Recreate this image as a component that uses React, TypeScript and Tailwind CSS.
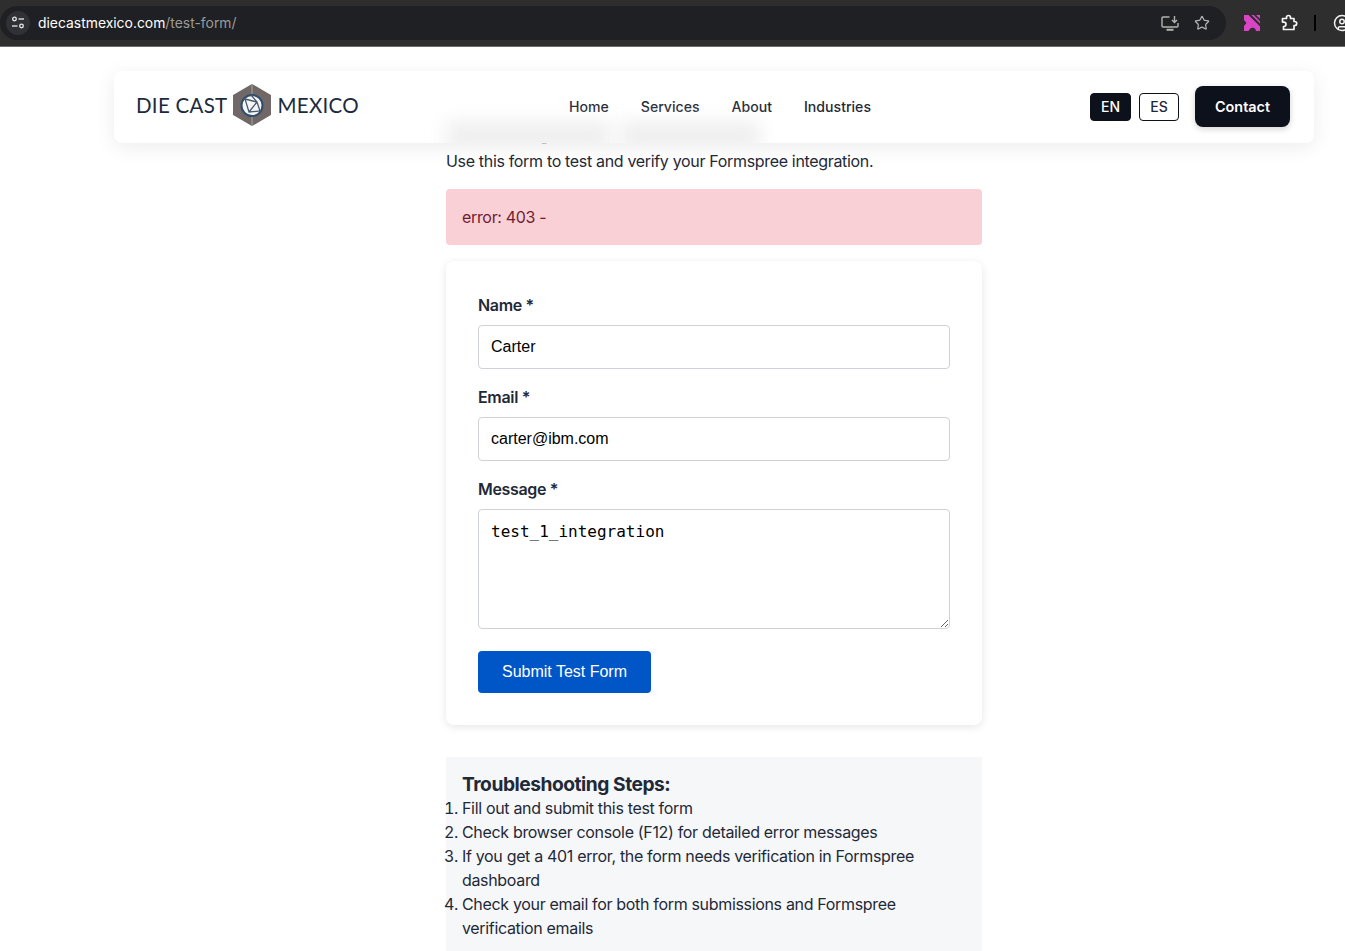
import { CircleUser, Star } from "lucide-react";

const steps = [
  "Fill out and submit this test form",
  "Check browser console (F12) for detailed error messages",
  "If you get a 401 error, the form needs verification in Formspree dashboard",
  "Check your email for both form submissions and Formspree verification emails",
];

const navLinks = ["Home", "Services", "About", "Industries"];

function TuneIcon() {
  return (
    <svg width="16" height="16" viewBox="0 0 16 16" fill="none" stroke="#e8eaed" strokeWidth="1.3">
      <circle cx="4.5" cy="4" r="1.8" />
      <path d="M8.5 4H14" />
      <circle cx="11.5" cy="11" r="1.8" />
      <path d="M2 11H7.5" />
    </svg>
  );
}

function InstallIcon() {
  return (
    <svg width="18" height="16" viewBox="0 0 18 16" fill="none" stroke="#b3b3b3" strokeWidth="1.4">
      <path d="M8.5 2H2a1 1 0 0 0-1 1v8a1 1 0 0 0 1 1h14a1 1 0 0 0 1-1V8" />
      <path d="M5.5 14.8h7" strokeWidth="2" />
      <path d="M13.5 1v6M11 5l2.5 2.5L16 5" />
    </svg>
  );
}

function PinkExtension() {
  return (
    <svg width="16" height="16" viewBox="0 0 16 16">
      <path fill="#d945c4" d="M0 0h4.500L16 11.500V16h-4a3.500 3.500 0 0 0-6.500-1.500L4.500 16H0v-5l2.500-3L0 5z" />
      <path fill="#d945c4" d="M7.500 0h2.300L16 6.200V8.500zM12 0h4v3.800z" />
    </svg>
  );
}

function PuzzleOutline() {
  return (
    <svg width="18" height="18" viewBox="0 0 18 18" fill="none" stroke="#f4f4f4" strokeWidth="1.7" strokeLinejoin="round">
      <path d="M2.500 4.500H6.500V3.500a2 2 0 0 1 4 0V4.500H14V7.500h.7a2 2 0 0 1 0 4H14V15.500H3.500V12.500h.3a2.200 2.200 0 0 0 0-4.400H2.500z" />
    </svg>
  );
}

function LogoMark() {
  return (
    <svg width="40" height="42" viewBox="0 0 40 42">
      <path fill="#6f6866" stroke="#6f6866" strokeWidth="2" strokeLinejoin="round" d="M20 1 38 11.500v19L20 41 2 30.500v-19z" />
      <path stroke="#a9a4a2" strokeWidth="1" d="M20 0v42" />
      <circle cx="20" cy="21.500" r="10.500" fill="#f4f5f6" stroke="#2f4d6e" strokeWidth="2" />
      <path fill="none" stroke="#4a5a6c" strokeWidth="1.300" d="M13 15l12 3 3 9-11 1-4-13zM25 18l-6-7M17 28l8-10" />
    </svg>
  );
}

export default function App() {
  return (
    <div className="h-screen w-screen overflow-hidden bg-white font-['Inter',sans-serif] text-[#1f2937]">
      <div className="w-[1428px]">
        {/* browser chrome */}
        <div className="flex h-[47px] items-center border-b border-[#6b6b6b] bg-[#2e2e2e]">
          <div className="flex h-[34px] w-[1226px] items-center rounded-[17px] bg-[#1f2023] pl-[6px] pr-[16px]">
            <div className="flex h-6 w-6 items-center justify-center rounded-full bg-[#303134]">
              <TuneIcon />
            </div>
            <span className="ml-2 text-[13.9px] text-white">diecastmexico.com</span>
            <span className="text-[13.9px] text-[#9a9a9a]">/test-form/</span>
            <div className="ml-auto flex items-center gap-[15px]">
              <InstallIcon />
              <Star size={16} color="#b3b3b3" strokeWidth={1.8} />
            </div>
          </div>
          <div className="ml-[18px]">
            <PinkExtension />
          </div>
          <div className="ml-[20px]">
            <PuzzleOutline />
          </div>
          <div className="ml-[16px] h-[16px] w-[2px] bg-black" />
          <CircleUser className="ml-[17px]" size={18} color="#f1f1f1" strokeWidth={2} />
        </div>

        <div className="relative">
          {/* site header, floats over the page */}
          <header className="absolute left-[114px] top-[24px] z-10 flex h-[72px] w-[1200px] items-center overflow-hidden rounded-lg bg-white pl-[22px] pr-[24px] shadow-[0_4px_20px_rgba(0,0,0,0.08)]">
            {/* frosted smudge of the page title passing under the header */}
            <div className="absolute left-[332px] top-[50px] h-[30px] w-[164px] bg-[#efefef] blur-[9px]" />
            <div className="absolute left-[506px] top-[50px] h-[30px] w-[140px] bg-[#efefef] blur-[9px]" />

            <div className="mb-1 flex w-[222px] items-center whitespace-nowrap text-[#1c2a3d]">
              <span className="font-['Lato',sans-serif] text-[20.5px] leading-none tracking-[0.28px]">DIE CAST</span>
              <div className="ml-[5px] mr-[5px] shrink-0">
                <LogoMark />
              </div>
              <span className="font-['Lato',sans-serif] text-[20.5px] leading-none tracking-[0.28px]">MEXICO</span>
            </div>
            <nav className="ml-[211px] flex gap-8">
              {navLinks.map((link) => (
                <a key={link} className="text-[14.1px] font-medium leading-5 text-[#1f2937]">
                  {link}
                </a>
              ))}
            </nav>
            <div className="ml-auto flex items-center gap-2">
              <button className="h-7 w-[41px] rounded border border-[#0d111c] bg-[#0d111c] text-sm font-medium text-white">EN</button>
              <button className="h-7 w-10 rounded border border-[#0d111c] bg-white text-sm font-medium text-[#1f2937]">ES</button>
              <button className="mb-px ml-2 h-[41px] w-[95px] rounded-lg bg-[#0d111c] text-[14.4px] font-semibold text-white shadow-[0_2px_6px_rgba(0,0,0,0.18)]">Contact</button>
            </div>
          </header>

          <main className="ml-[446px] w-[536px] pt-[60px] text-base leading-6 tracking-[-0.33px]">
            <h1 className="mb-1 text-[32px] font-bold leading-[38px] tracking-[-0.85px]">Formspree Test Form</h1>
            <p className="mb-4">Use this form to test and verify your Formspree integration.</p>

            <div className="mb-4 rounded bg-[#f8d0d6] p-4 text-[#721c30]">error: 403 -</div>

            <form className="mb-8 rounded-lg bg-white p-8 shadow-[0_2px_8px_rgba(0,0,0,0.1)]">
              <label className="mb-2 block font-semibold">Name *</label>
              <input
                readOnly
                value="Carter"
                className="mb-4 block h-11 w-full rounded border border-[#cfd2d6] px-3 font-['Liberation_Sans',sans-serif] tracking-normal text-black outline-none"
              />
              <label className="mb-2 block font-semibold">Email *</label>
              <input
                readOnly
                value="carter@ibm.com"
                className="mb-4 block h-11 w-full rounded border border-[#cfd2d6] px-3 font-['Liberation_Sans',sans-serif] tracking-normal text-black outline-none"
              />
              <label className="mb-2 block font-semibold">Message *</label>
              <textarea
                readOnly
                value="test_1_integration"
                className="mb-[22px] block h-[120px] w-full rounded border border-[#cfd2d6] px-3 py-[10px] font-['DejaVu_Sans_Mono',monospace] tracking-normal text-black outline-none"
              />
              <button type="button" className="block h-[42px] w-[173px] rounded bg-[#0056c6] font-['Liberation_Sans',sans-serif] tracking-normal text-white">
                Submit Test Form
              </button>
            </form>

            <section className="bg-[#f6f7f9] p-4">
              <h3 className="text-[19.2px] font-bold leading-[23px] tracking-[-0.47px]">Troubleshooting Steps:</h3>
              <ol className="list-outside list-decimal">
                {steps.map((step) => (
                  <li key={step}>{step}</li>
                ))}
              </ol>
            </section>
          </main>
        </div>
      </div>
    </div>
  );
}
